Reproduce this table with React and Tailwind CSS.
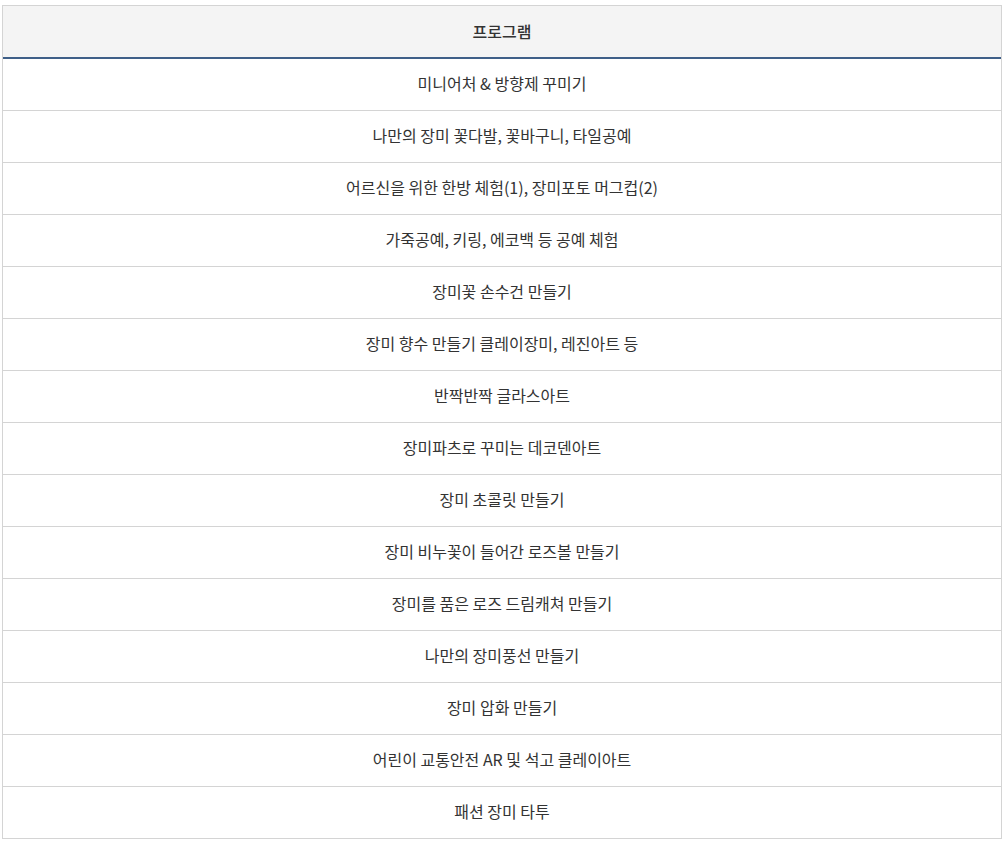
import React from "react";

const programs = [
  "미니어처 & 방향제 꾸미기",
  "나만의 장미 꽃다발, 꽃바구니, 타일공예",
  "어르신을 위한 한방 체험(1), 장미포토 머그컵(2)",
  "가죽공예, 키링, 에코백 등 공예 체험",
  "장미꽃 손수건 만들기",
  "장미 향수 만들기 클레이장미, 레진아트 등",
  "반짝반짝 글라스아트",
  "장미파츠로 꾸미는 데코덴아트",
  "장미 초콜릿 만들기",
  "장미 비누꽃이 들어간 로즈볼 만들기",
  "장미를 품은 로즈 드림캐쳐 만들기",
  "나만의 장미풍선 만들기",
  "장미 압화 만들기",
  "어린이 교통안전 AR 및 석고 클레이아트",
  "패션 장미 타투",
];

export default function App() {
  return (
    <div className="min-h-screen bg-white pt-[5px] pl-[2px] font-['Noto_Sans_CJK_KR','Noto_Sans',sans-serif] text-[16px] text-[#333]">
      <div className="w-[1000px] border-t border-x border-[#d4d4d4]">
        <div className="h-[53px] pb-[2px] bg-[#f4f4f4] border-b-2 border-[#3f5f88] flex items-center justify-center font-medium text-[#333]">
          프로그램
        </div>
        {programs.map((p) => (
          <div key={p} className="h-[52px] pb-[3px] border-b border-[#d4d4d4] flex items-center justify-center">
            {p}
          </div>
        ))}
      </div>
    </div>
  );
}
